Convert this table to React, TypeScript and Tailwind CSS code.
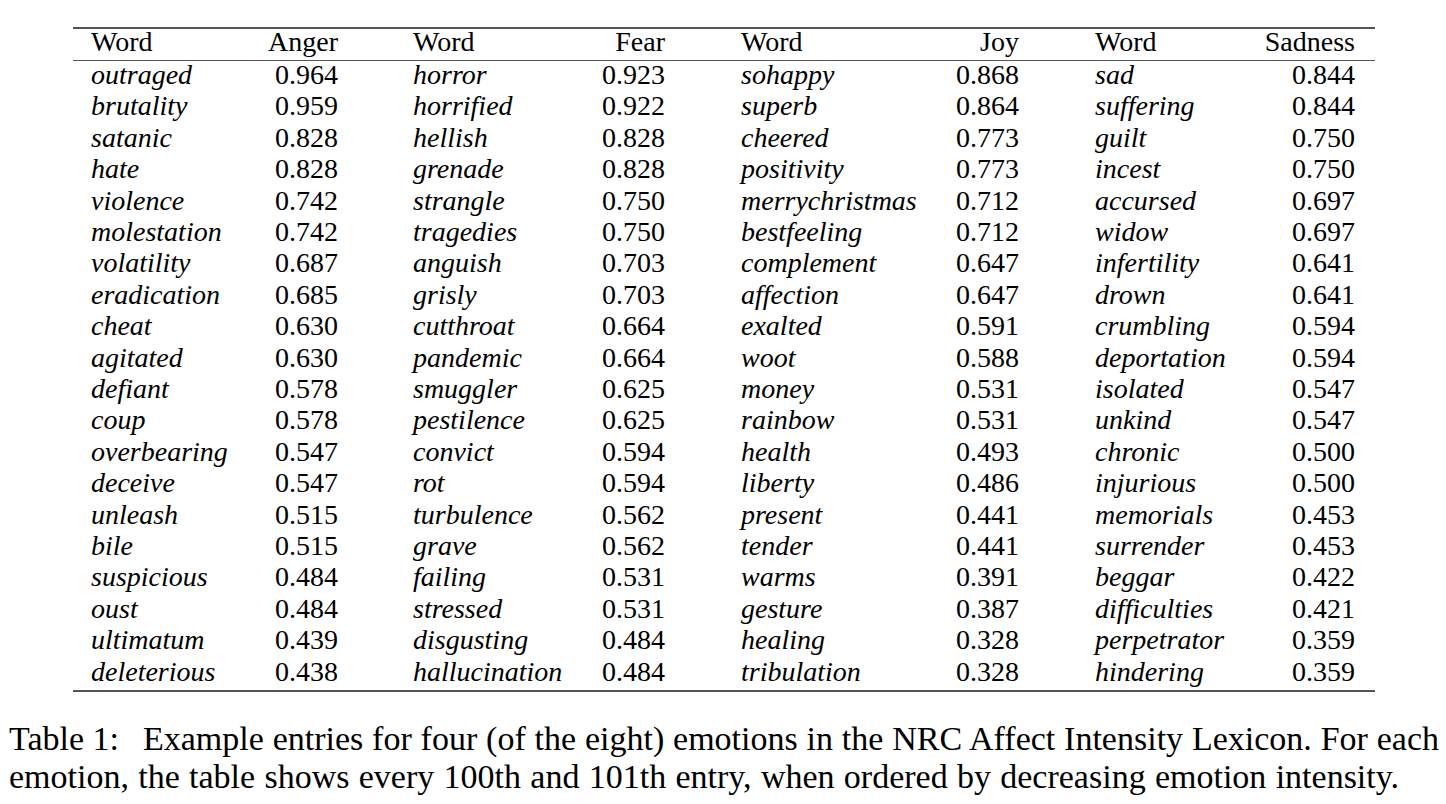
import React from 'react';

type Entry = [string, string];

const anger: Entry[] = [
  ['outraged', '0.964'], ['brutality', '0.959'], ['satanic', '0.828'], ['hate', '0.828'],
  ['violence', '0.742'], ['molestation', '0.742'], ['volatility', '0.687'], ['eradication', '0.685'],
  ['cheat', '0.630'], ['agitated', '0.630'], ['defiant', '0.578'], ['coup', '0.578'],
  ['overbearing', '0.547'], ['deceive', '0.547'], ['unleash', '0.515'], ['bile', '0.515'],
  ['suspicious', '0.484'], ['oust', '0.484'], ['ultimatum', '0.439'], ['deleterious', '0.438'],
];

const fear: Entry[] = [
  ['horror', '0.923'], ['horrified', '0.922'], ['hellish', '0.828'], ['grenade', '0.828'],
  ['strangle', '0.750'], ['tragedies', '0.750'], ['anguish', '0.703'], ['grisly', '0.703'],
  ['cutthroat', '0.664'], ['pandemic', '0.664'], ['smuggler', '0.625'], ['pestilence', '0.625'],
  ['convict', '0.594'], ['rot', '0.594'], ['turbulence', '0.562'], ['grave', '0.562'],
  ['failing', '0.531'], ['stressed', '0.531'], ['disgusting', '0.484'], ['hallucination', '0.484'],
];

const joy: Entry[] = [
  ['sohappy', '0.868'], ['superb', '0.864'], ['cheered', '0.773'], ['positivity', '0.773'],
  ['merrychristmas', '0.712'], ['bestfeeling', '0.712'], ['complement', '0.647'], ['affection', '0.647'],
  ['exalted', '0.591'], ['woot', '0.588'], ['money', '0.531'], ['rainbow', '0.531'],
  ['health', '0.493'], ['liberty', '0.486'], ['present', '0.441'], ['tender', '0.441'],
  ['warms', '0.391'], ['gesture', '0.387'], ['healing', '0.328'], ['tribulation', '0.328'],
];

const sadness: Entry[] = [
  ['sad', '0.844'], ['suffering', '0.844'], ['guilt', '0.750'], ['incest', '0.750'],
  ['accursed', '0.697'], ['widow', '0.697'], ['infertility', '0.641'], ['drown', '0.641'],
  ['crumbling', '0.594'], ['deportation', '0.594'], ['isolated', '0.547'], ['unkind', '0.547'],
  ['chronic', '0.500'], ['injurious', '0.500'], ['memorials', '0.453'], ['surrender', '0.453'],
  ['beggar', '0.422'], ['difficulties', '0.421'], ['perpetrator', '0.359'], ['hindering', '0.359'],
];

// column widths measured off the reference, content box starts at x=91
const gridCols = 'grid grid-cols-[170px_77px_225px_102px_256px_98px_226px_110px] pl-[18px] pr-[20px]';

function Row({ i }: { i: number }) {
  return (
    <div className={`${gridCols} leading-[31.4px]`}>
      <span className="italic whitespace-nowrap">{anger[i][0]}</span>
      <span className="text-right">{anger[i][1]}</span>
      <span className="italic whitespace-nowrap pl-[75px]">{fear[i][0]}</span>
      <span className="text-right">{fear[i][1]}</span>
      <span className="italic whitespace-nowrap pl-[76px]">{joy[i][0]}</span>
      <span className="text-right">{joy[i][1]}</span>
      <span className="italic whitespace-nowrap pl-[76px]">{sadness[i][0]}</span>
      <span className="text-right">{sadness[i][1]}</span>
    </div>
  );
}

export default function App() {
  return (
    <div className="min-h-screen bg-white text-black font-['Liberation_Serif','Times_New_Roman',serif]">
      {/* Table */}
      <div className="ml-[73px] w-[1302px] pt-[27px] text-[28px]">
        <div className="border-t-2 border-[#555]" />
        <div className={`${gridCols} leading-[31.4px] -mt-[3px] mb-[3px]`}>
          <span>Word</span>
          <span className="text-right">Anger</span>
          <span className="pl-[75px]">Word</span>
          <span className="text-right">Fear</span>
          <span className="pl-[76px]">Word</span>
          <span className="text-right">Joy</span>
          <span className="pl-[76px]">Word</span>
          <span className="text-right">Sadness</span>
        </div>
        <div className="border-t border-[#555]" />
        <div className="-mt-[2.5px]">
          {anger.map((_, i) => (
            <Row key={i} i={i} />
          ))}
        </div>
        <div className="mt-[3px] border-t-2 border-[#555]" />
      </div>

      {/* Caption */}
      <div className="mt-[28px] ml-[9px] w-[1430px] text-[34px] leading-[37.7px]">
        <p className="whitespace-nowrap flex justify-between">
          <span>Table 1:</span>
          <span className="ml-[24px] flex-1 text-justify [text-align-last:justify]">
            Example entries for four (of the eight) emotions in the NRC Affect Intensity Lexicon. For each
          </span>
        </p>
        <p className="whitespace-nowrap [word-spacing:0.8px]">
          emotion, the table shows every 100th and 101th entry, when ordered by decreasing emotion intensity.
        </p>
      </div>
    </div>
  );
}
